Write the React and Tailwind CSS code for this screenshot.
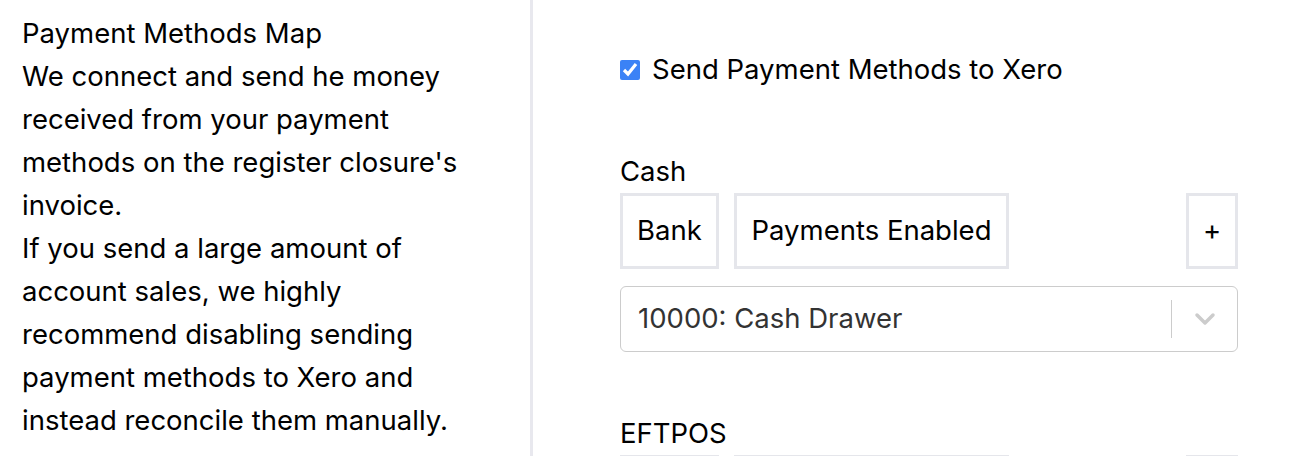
import React from 'react';

const methods = [
  { name: 'Cash', account: '10000: Cash Drawer' },
  { name: 'EFTPOS', account: '10010: EFTPOS Clearing' },
];

const Tag = ({ children, className = '' }) => (
  <div className={`h-[76px] border-[3px] border-[#e5e6eb] flex items-center justify-center text-[27.5px] text-black ${className}`}>
    {children}
  </div>
);

const MethodRow = ({ method }) => (
  <div className="mb-[65px]">
    <div className="text-[27.5px] leading-[32px] text-black mb-[6px]">{method.name}</div>
    <div className="flex items-center gap-[15px]">
      <Tag className="w-[99px]">Bank</Tag>
      <Tag className="w-[275px]">Payments Enabled</Tag>
      <div className="flex-1" />
      <Tag className="w-[52px]">+</Tag>
    </div>
    <div className="mt-[17px] h-[66px] rounded-[6px] border border-[#cccccc] flex items-center pl-[17px] text-[27.5px] text-[#333333]">
      <span className="flex-1">{method.account}</span>
      <span className="w-px h-[38px] bg-[#cccccc]" />
      <span className="w-[65px] flex items-center justify-center text-[#cccccc]">
        <svg width="22" height="14" viewBox="0 0 22 14" fill="none">
          <path d="M3 3l8 8 8-8" stroke="currentColor" strokeWidth="3.5" strokeLinecap="round" strokeLinejoin="round" />
        </svg>
      </span>
    </div>
  </div>
);

export default function App() {
  return (
    <div className="w-[1310px] h-[456px] overflow-hidden bg-white flex" style={{ fontFamily: 'Inter, "Noto Sans", sans-serif' }}>
      <div className="w-[530px] shrink-0 pl-[22px] pr-[48px] pt-[12px] text-[27.5px] leading-[43px] text-black">
        <div>Payment Methods Map</div>
        <div>
          We connect and send he money received from your payment methods on the register closure's invoice.
        </div>
        <div>
          If you send a large amount of account sales, we highly recommend disabling sending payment methods to Xero and instead reconcile them manually.
        </div>
      </div>
      <div className="w-[3px] shrink-0 bg-[#e8e8ee]" />
      <div className="w-[705px] shrink-0 pl-[87px] pt-[56px]">
        <label className="flex items-center gap-[12px] text-[27.5px] text-black mb-[71px] h-[28px]">
          <input type="checkbox" defaultChecked className="w-[20px] h-[20px] accent-[#3b82f6] m-0" />
          <span>Send Payment Methods to Xero</span>
        </label>
        {methods.map((m) => (
          <MethodRow key={m.name} method={m} />
        ))}
      </div>
    </div>
  );
}
